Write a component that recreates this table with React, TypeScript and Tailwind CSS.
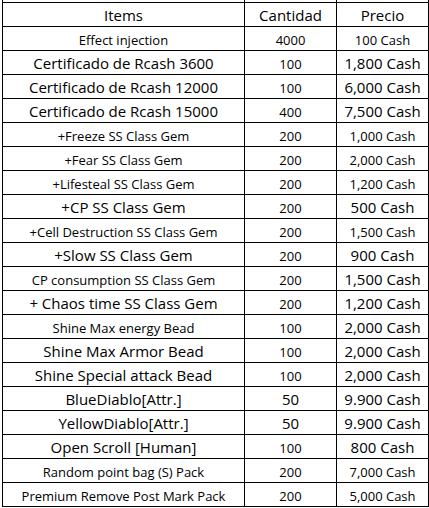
import React from "react";

type Row = { item: string; qty: string; price: string; il?: boolean; ql?: boolean; pl?: boolean };

const rows: Row[] = [
  { item: "Items", qty: "Cantidad", price: "Precio", il: true, ql: true, pl: true },
  { item: "Effect injection", qty: "4000", price: "100 Cash" },
  { item: "Certificado de Rcash 3600", qty: "100", price: "1,800 Cash", il: true, pl: true },
  { item: "Certificado de Rcash 12000", qty: "100", price: "6,000 Cash", il: true, pl: true },
  { item: "Certificado de Rcash 15000", qty: "400", price: "7,500 Cash", il: true, pl: true },
  { item: "+Freeze SS Class Gem", qty: "200", price: "1,000 Cash" },
  { item: "+Fear SS Class Gem", qty: "200", price: "2,000 Cash" },
  { item: "+Lifesteal SS Class Gem", qty: "200", price: "1,200 Cash" },
  { item: "+CP SS Class Gem", qty: "200", price: "500 Cash", il: true, pl: true },
  { item: "+Cell Destruction SS Class Gem", qty: "200", price: "1,500 Cash" },
  { item: "+Slow SS Class Gem", qty: "200", price: "900 Cash", il: true, pl: true },
  { item: "CP consumption SS Class Gem", qty: "200", price: "1,500 Cash", pl: true },
  { item: "+ Chaos time SS Class Gem", qty: "200", price: "1,200 Cash", il: true, pl: true },
  { item: "Shine Max energy Bead", qty: "100", price: "2,000 Cash", pl: true },
  { item: "Shine Max Armor Bead", qty: "100", price: "2,000 Cash", il: true, pl: true },
  { item: "Shine Special attack Bead", qty: "100", price: "2,000 Cash", il: true, pl: true },
  { item: "BlueDiablo[Attr.]", qty: "50", price: "9.900 Cash", il: true, ql: true, pl: true },
  { item: "YellowDiablo[Attr.]", qty: "50", price: "9.900 Cash", il: true, ql: true, pl: true },
  { item: "Open Scroll [Human]", qty: "100", price: "800 Cash", il: true, pl: true },
  { item: "Random point bag (S) Pack", qty: "200", price: "7,000 Cash" },
  { item: "Premium Remove Post Mark Pack", qty: "200", price: "5,000 Cash" },
];

function Cell({ text, large }: { text: string; large?: boolean }) {
  return (
    <div className="h-[24px] flex items-center justify-center border-r border-b border-black overflow-hidden">
      <span
        className={
          large
            ? "whitespace-pre text-[15px] leading-[20px] font-medium text-black"
            : "whitespace-pre text-[13px] leading-[18px] pt-[2px] font-medium text-black"
        }
      >
        {text}
      </span>
    </div>
  );
}

export default function App() {
  return (
    <div className="w-[429px] h-[508px] bg-white" style={{ fontFamily: '"Open Sans", sans-serif' }}>
      <div className="ml-[2px] w-[427px] grid grid-cols-[242px_92px_92px] border-l border-black">
        <div className="h-[3px] border-r border-b border-black" />
        <div className="h-[3px] border-r border-b border-black" />
        <div className="h-[3px] border-r border-b border-black" />
        {rows.map((r, i) => (
          <React.Fragment key={i}>
            <Cell text={r.item} large={r.il} />
            <Cell text={r.qty} large={r.ql} />
            <Cell text={r.price} large={r.pl} />
          </React.Fragment>
        ))}
      </div>
    </div>
  );
}
